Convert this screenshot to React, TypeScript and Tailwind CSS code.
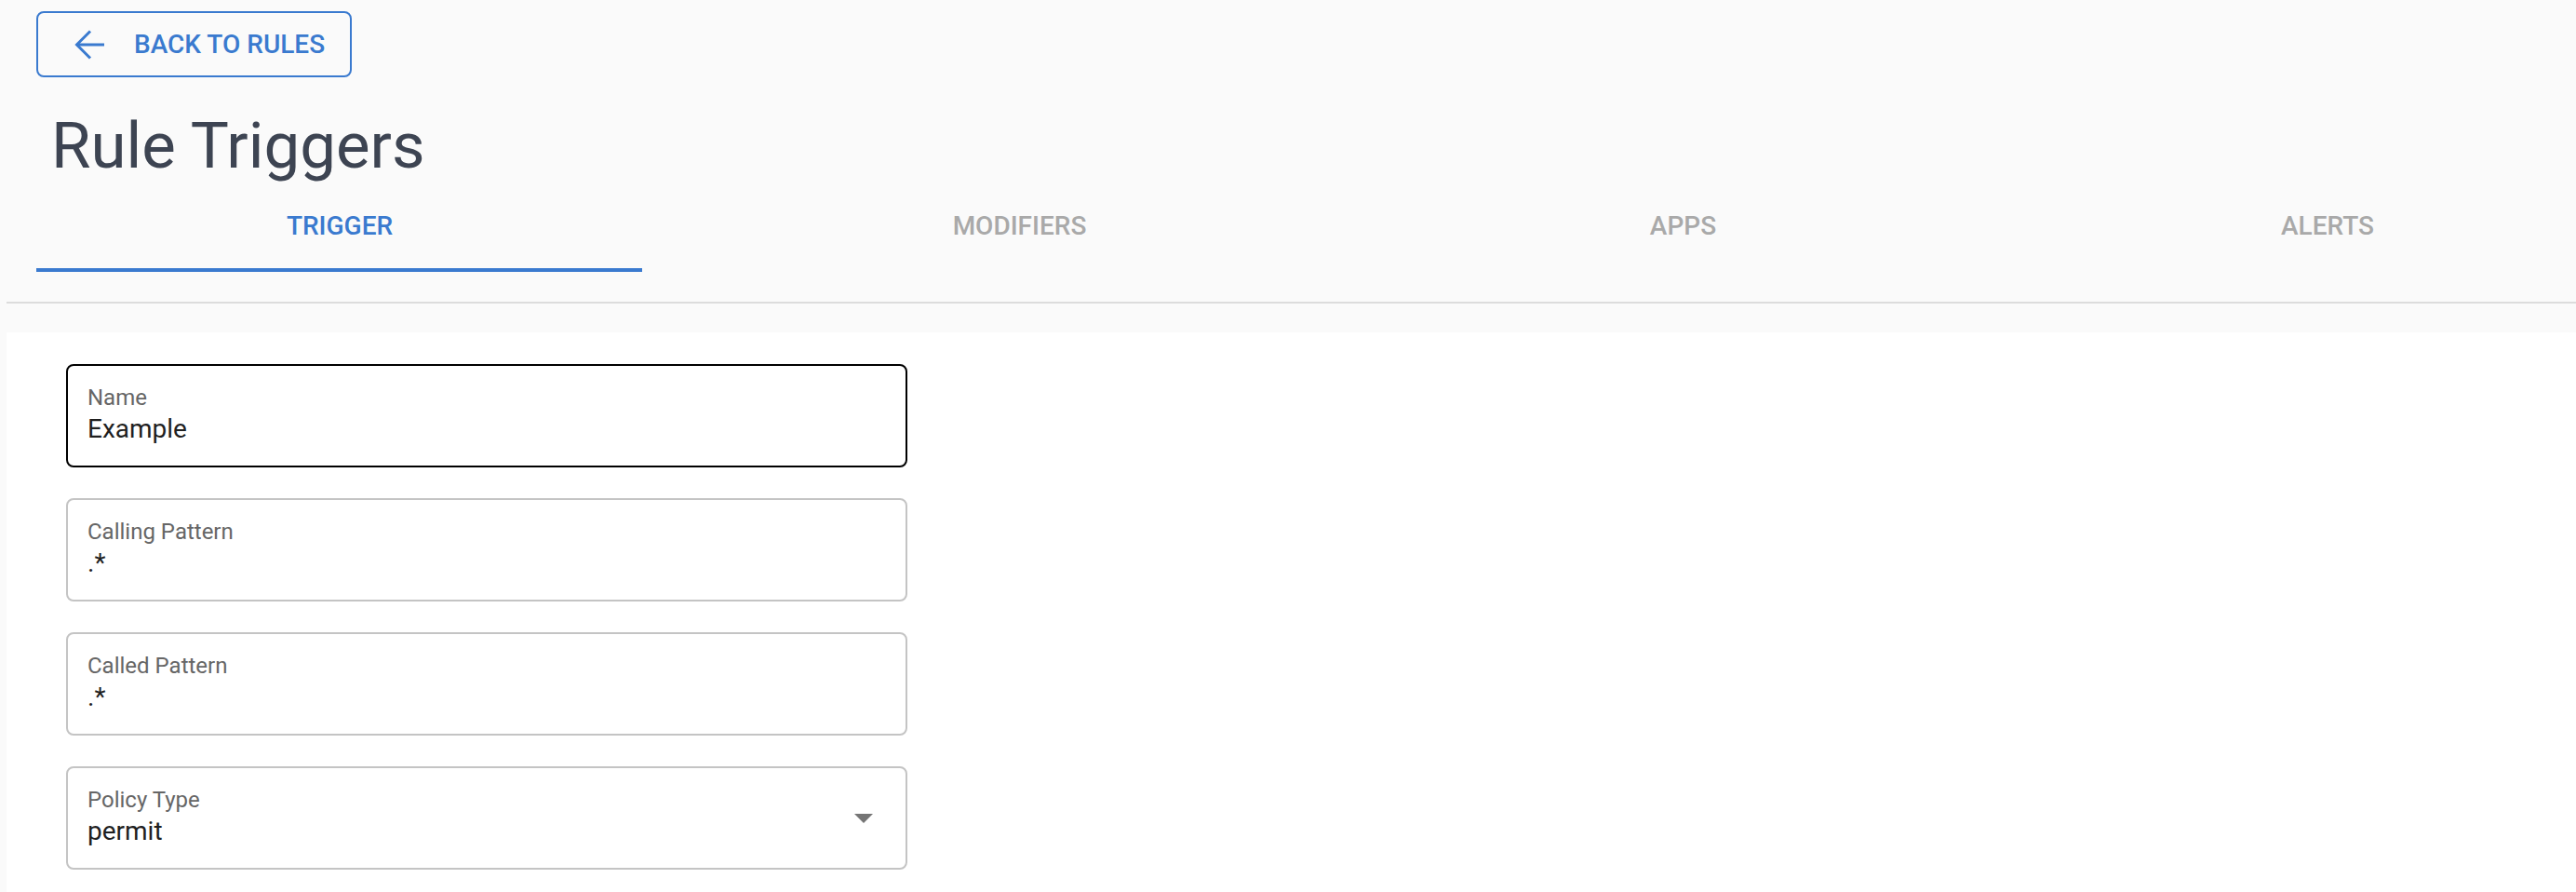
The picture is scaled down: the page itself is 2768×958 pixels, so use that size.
import React, { useState } from "react";

const TABS = [
  { id: "trigger", label: "Trigger", width: "w-[716px]" },
  { id: "modifiers", label: "Modifiers", width: "w-[745px]" },
  { id: "apps", label: "Apps", width: "w-[681px]" },
  { id: "alerts", label: "Alerts", width: "w-[704px]" },
];

const FIELDS = [
  { label: "Name", value: "Example", focused: true },
  { label: "Calling Pattern", value: ".*" },
  { label: "Called Pattern", value: ".*" },
  { label: "Policy Type", value: "permit", select: true },
];

function BackArrow() {
  return (
    <svg viewBox="0 0 34 32" className="h-[32px] w-[34px]" fill="none" stroke="currentColor" strokeWidth="3">
      <path d="M33 16H3" />
      <path d="M18 1.5 3.5 16 18 30.5" />
    </svg>
  );
}

function Field({ label, value, focused, select }: { label: string; value: string; focused?: boolean; select?: boolean }) {
  return (
    <div
      className={`relative h-[111px] w-[904px] rounded-lg border-2 bg-white pl-[21px] pt-[22px] ${
        focused ? "border-black" : "border-[#c4c4c4]"
      }`}
    >
      <div className="text-[24px] leading-[24px] text-[#666666]">{label}</div>
      <div className="mt-[6px] text-[28px] leading-[32px] text-[#1f1f1f]">{value}</div>
      {select && (
        <svg viewBox="0 0 20 10" className="absolute right-[35px] top-[49px] h-[10px] w-[20px]">
          <path d="M0 0h20L10 10z" fill="#757575" />
        </svg>
      )}
    </div>
  );
}

export default function App() {
  const [tab, setTab] = useState("trigger");

  return (
    <div className="h-[958px] w-full overflow-hidden bg-[#fafafa] font-['Roboto',sans-serif]">
      {/* header */}
      <div className="pl-[39px] pt-[12px]">
        <button className="flex h-[71px] w-[339px] items-center rounded-lg border-2 border-[#3a7acf] pl-[38px] text-[#3a7acf]">
          <BackArrow />
          <span className="ml-[31px] text-[28px] font-medium uppercase leading-[28px]">Back to Rules</span>
        </button>
        <h1 className="ml-[16px] mt-[39px] text-[69px] font-normal leading-[69px] text-[#3d4452]">Rule Triggers</h1>
      </div>

      {/* tabs */}
      <div className="ml-[7px] border-b-2 border-[#dcdcdc]">
        <div className="flex pt-[38px]">
          {TABS.map((t) => (
            <button
              key={t.id}
              onClick={() => setTab(t.id)}
              className={`${t.width} shrink-0 text-center text-[28px] font-medium uppercase leading-[28px] ${
                tab === t.id ? "text-[#3a7acf]" : "text-[#a9a9a9]"
              }`}
            >
              {t.label}
            </button>
          ))}
        </div>
        <div className="ml-[32px] mt-[31px] h-[4px] w-[651px] bg-[#3a7acf]" />
        <div className="h-[32px]" />
      </div>
      <div className="h-[31px]" />

      {/* form */}
      <div className="ml-[7px] h-full bg-white pl-[64px] pt-[34px]">
        <div className="flex flex-col gap-[33px]">
          {FIELDS.map((f) => (
            <Field key={f.label} {...f} />
          ))}
        </div>
      </div>
    </div>
  );
}
